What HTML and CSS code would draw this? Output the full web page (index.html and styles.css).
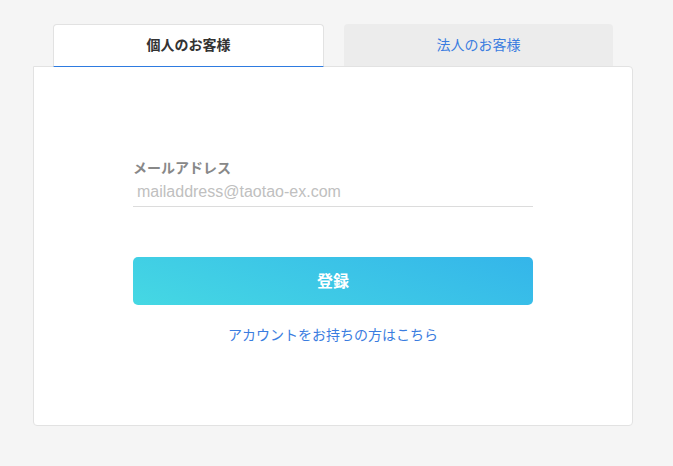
FILE: index.html
```html
<!DOCTYPE html>
<html lang="ja">

<head>
    <meta charset="UTF-8">
    <meta name="viewport" content="width=device-width, initial-scale=1.0">
    <title>新規登録</title>
    <link rel="stylesheet" href="styles.css">
</head>

<body>

    <div class="wrapper">
        <!-- Tabs -->
        <div class="tabs">
            <div class="tab active">個人のお客様</div>
            <div class="tab">法人のお客様</div>
        </div>

        <!-- Register Form -->
        <div class="card">
            <div class="form">
                <label for="email">メールアドレス</label>
                <input type="text" id="email" placeholder="mailaddress@taotao-ex.com">

                <button type="button">登録</button>

                <a href="#" class="login-link">アカウントをお持ちの方はこちら</a>
            </div>
        </div>
    </div>

</body>

</html>
```

FILE: styles.css
```css
body {
    font-family: "Liberation Sans", "Noto Sans CJK JP", sans-serif;
    background-color: #f5f5f5;
    margin: 0;
    padding: 0;
}

.wrapper {
    width: 600px;
    margin-left: 33px;
    padding-top: 24px;
}

.tabs {
    display: flex;
    gap: 20px;
    padding: 0 20px;
    margin-bottom: -1px;
}

.tab {
    width: 269px;
    height: 42px;
    padding-bottom: 3px;
    display: flex;
    align-items: center;
    justify-content: center;
    font-size: 14px;
    color: #3b7de0;
    background-color: #ececec;
    border-radius: 4px 4px 0 0;
    box-sizing: border-box;
}

.tab.active {
    width: 271px;
    height: 43px;
    position: relative;
    z-index: 1;
    background-color: #fff;
    color: #333;
    font-weight: bold;
    border: 1px solid #e2e2e2;
    border-bottom: 1px solid #2e7be0;
}

.card {
    background-color: #fff;
    border: 1px solid #e2e2e2;
    border-radius: 0 4px 4px 4px;
    height: 360px;
    box-sizing: border-box;
}

.form {
    width: 400px;
    margin: 0 auto;
    padding-top: 90px;
    display: flex;
    flex-direction: column;
}

label {
    font-family: "Noto Sans CJK JP", sans-serif;
    font-weight: bold;
    font-size: 14px;
    line-height: 20px;
    color: #888;
    margin-bottom: 2px;
}

input[type="text"] {
    font-family: "Liberation Sans", sans-serif;
    font-size: 16px;
    line-height: 24px;
    height: 28px;
    padding: 1px 4px 3px 4px;
    border: none;
    border-bottom: 1px solid #dcdcdc;
    outline: none;
    box-sizing: border-box;
    color: #333;
}

input[type="text"]::placeholder {
    color: #c0c0c0;
}

button {
    margin-top: 50px;
    height: 48px;
    padding-bottom: 4px;
    border: none;
    border-radius: 5px;
    background: linear-gradient(20deg, #45d8e3, #34b5ea);
    color: #fff;
    font-family: "Noto Sans CJK JP", sans-serif;
    font-size: 16px;
    font-weight: bold;
    cursor: pointer;
}

.login-link {
    margin-top: 19px;
    text-align: center;
    font-family: "Noto Sans CJK JP", sans-serif;
    font-size: 14px;
    line-height: 20px;
    color: #3b7de0;
    text-decoration: none;
}
```
